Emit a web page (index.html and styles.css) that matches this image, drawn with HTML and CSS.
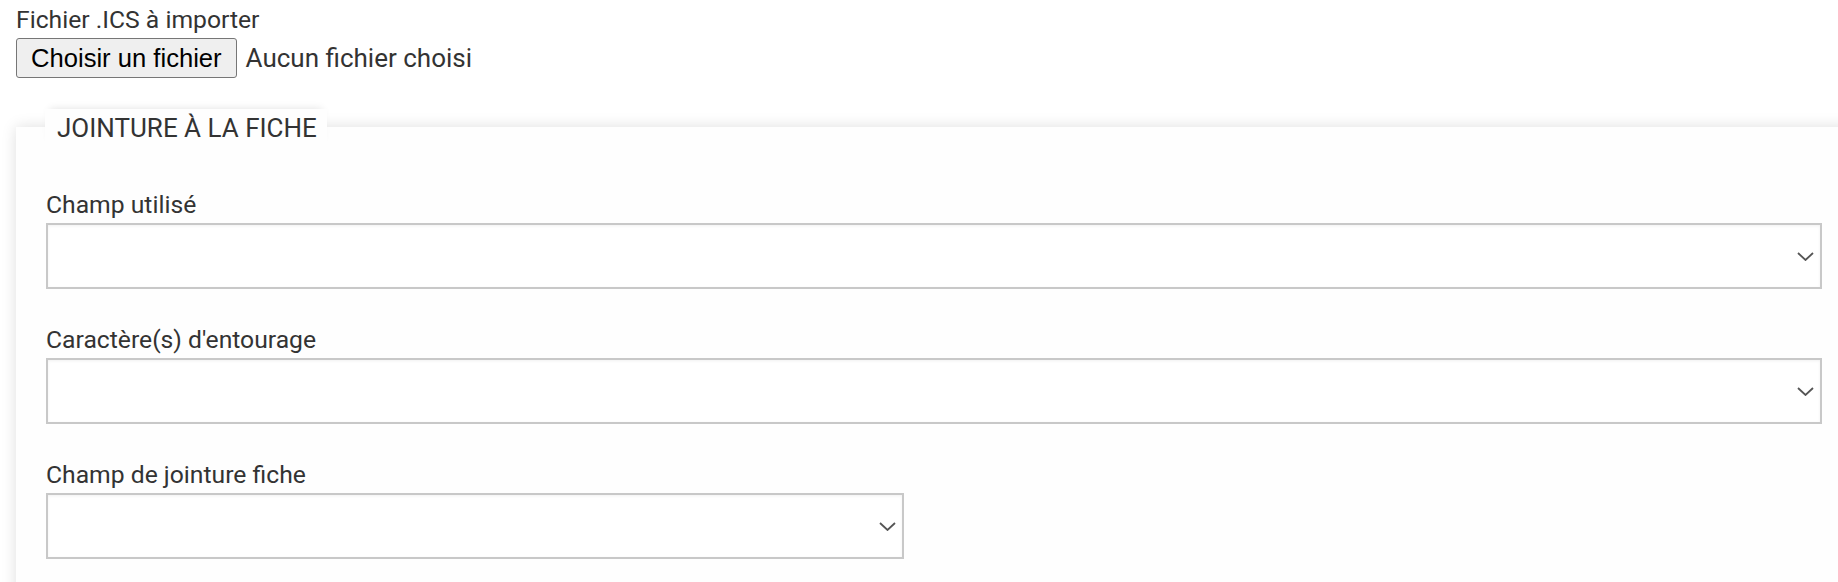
FILE: index.html
```html
<!DOCTYPE html>
<html lang="fr">
<head>
<meta charset="utf-8">
<title>Import ICS</title>
<link rel="stylesheet" href="styles.css">
</head>
<body>
<div class="page">
  <div class="file-field">
    <label class="top-label">Fichier .ICS à importer</label>
    <div class="file-row">
      <button class="file-btn" type="button">Choisir un fichier</button>
      <span class="file-name">Aucun fichier choisi</span>
    </div>
  </div>

  <div class="panel">
    <div class="legend">JOINTURE À LA FICHE</div>
    <div class="fields">
      <div class="field">
        <div class="field-label">Champ utilisé</div>
        <div class="select">
          <svg width="17" height="9" viewBox="0 0 17 9"><path d="M1 1 L8.5 8 L16 1" fill="none" stroke="#555" stroke-width="1.8"/></svg>
        </div>
      </div>
      <div class="field">
        <div class="field-label">Caractère(s) d'entourage</div>
        <div class="select">
          <svg width="17" height="9" viewBox="0 0 17 9"><path d="M1 1 L8.5 8 L16 1" fill="none" stroke="#555" stroke-width="1.8"/></svg>
        </div>
      </div>
      <div class="field">
        <div class="field-label">Champ de jointure fiche</div>
        <div class="select half">
          <svg width="17" height="9" viewBox="0 0 17 9"><path d="M1 1 L8.5 8 L16 1" fill="none" stroke="#555" stroke-width="1.8"/></svg>
        </div>
      </div>
    </div>
  </div>
</div>
</body>
</html>
```

FILE: styles.css
```css
html, body {
  margin: 0;
  padding: 0;
  background: #ffffff;
  overflow: hidden;
}

body {
  font-family: Roboto, "Noto Sans", sans-serif;
  color: #333333;
}

.page {
  padding: 6px 0 0 16px;
}

.top-label {
  display: block;
  font-size: 24.7px;
  line-height: 28px;
  color: #333333;
}

.file-row {
  display: flex;
  align-items: center;
  gap: 9px;
  margin-top: 4px;
}

.file-btn {
  font-family: "Liberation Sans", Arial, sans-serif;
  font-size: 25.6px;
  height: 40px;
  padding: 0 14px;
  border: 1px solid #767676;
  border-radius: 3px;
  background: #efefef;
  color: #000;
}

.file-name {
  font-size: 26px;
  line-height: 28px;
  color: #333333;
}

.panel {
  display: flow-root;
  margin-top: 49px;
  margin-right: -14px;
  background: #fefefe;
  box-shadow: 0 0 14px rgba(0, 0, 0, 0.13);
  padding: 0 30px 40px 30px;
  min-height: 500px;
}

.legend {
  display: block;
  width: fit-content;
  margin-top: -18px;
  margin-left: -1px;
  padding: 5px 10px 7px 12px;
  font-size: 26px;
  line-height: 28px;
  color: #333333;
  background: #fefefe;
  box-shadow: 0 -5px 8px -5px rgba(0, 0, 0, 0.12);
}

.fields {
  display: flex;
  flex-direction: column;
  gap: 37px;
  margin-top: 42px;
}

.field-label {
  font-size: 24.7px;
  line-height: 28px;
  margin-bottom: 4px;
}

.select {
  box-sizing: border-box;
  height: 66px;
  border: 2px solid #c8c8c8;
  background: #ffffff;
  box-shadow: inset 0 1px 3px rgba(0, 0, 0, 0.06);
  display: flex;
  align-items: center;
  justify-content: flex-end;
  padding-right: 6px;
}

.select.half {
  width: calc(50% - 30px);
}
```
